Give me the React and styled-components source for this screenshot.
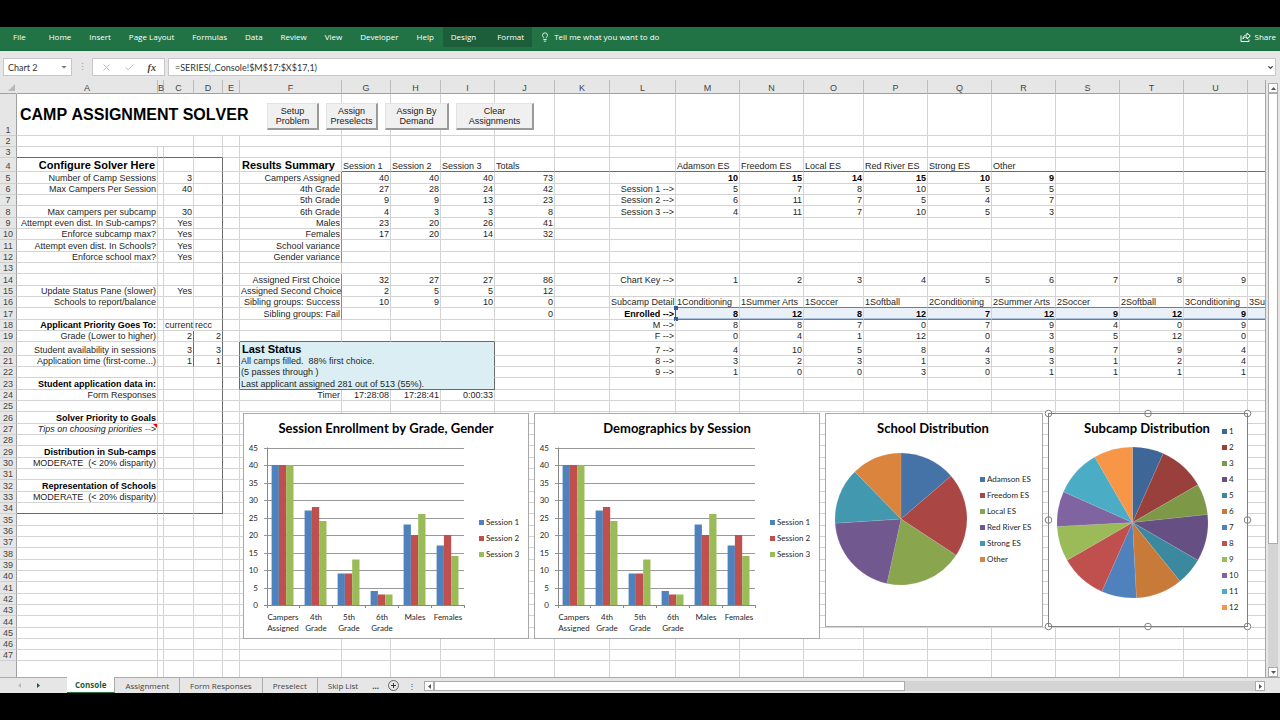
import styled, { createGlobalStyle, css } from 'styled-components';
import { Lightbulb, X, Check, ChevronDown } from 'lucide-react';

const GlobalStyle = createGlobalStyle`
  * {
    box-sizing: border-box;
  }
  body {
    margin: 0;
    background: #000;
    --green: #217346;
    --darkGreen: #1b5e39;
    --chrome: #e6e6e6;
    --line: #d3d3d3;
    --edge: #6b6b6b;
    --ui: 'Open Sans', 'Noto Sans', sans-serif;
    --sheet: 'Liberation Sans', Arial, sans-serif;
    --chart: Lato, 'Open Sans', sans-serif;
  }
  button, input {
    font: inherit;
    color: inherit;
    border: 0;
    margin: 0;
    padding: 0;
    background: none;
  }
`;

const AppStyles = styled.div`
  height: 100vh;
  padding: 27px 0;
  display: flex;
  flex-direction: column;
  background: #000;
`;

const Ribbon = styled.nav`
  flex: 0 0 24px;
  display: flex;
  align-items: flex-start;
  padding: 0 0 0 4px;
  background: var(--green);
  border-bottom: 1px solid #1b6b3f;
  color: #fff;
  font-family: var(--ui);
  font-size: 8px;
  line-height: 20px;
`;

const RibbonTab = styled.button`
  height: 20px;
  padding: 0 9px;
  white-space: nowrap;
  &:first-child {
    margin-right: 5px;
  }
`;

const ContextTabs = styled.div`
  display: flex;
  background: var(--darkGreen);
  button {
    margin: 0;
    padding: 0 8px;
  }
`;

const RibbonAction = styled.button`
  display: flex;
  align-items: center;
  gap: 4px;
  height: 20px;
  padding: 0 4px 0 8px;
  white-space: nowrap;
  margin-left: ${(props) => (props.$end ? 'auto' : '0')};
`;

const FormulaBar = styled.div`
  flex: 0 0 29px;
  display: flex;
  align-items: flex-start;
  padding: 7px 4px 0 3px;
  background: var(--chrome);
  font-family: var(--chart);
  font-size: 9px;
  color: #333;
`;

const barBox = css`
  display: flex;
  align-items: center;
  height: 18px;
  background: #fff;
  border: 1px solid #c8c8c8;
`;

const NameBox = styled.div`
  ${barBox}
  width: 69px;
  padding: 0 4px;
  input {
    flex: 1;
    min-width: 0;
  }
`;

const Grip = styled.span`
  width: 20px;
  line-height: 18px;
  text-align: center;
  color: #999;
`;

const FormulaTools = styled.div`
  ${barBox}
  width: 73px;
  margin-right: 3px;
  justify-content: space-around;
  padding: 0 2px;
  color: #b5b5b5;
  button {
    display: flex;
  }
  .fx {
    font: italic bold 10px 'Liberation Serif', serif;
    color: #444;
  }
`;

const FormulaField = styled.div`
  ${barBox}
  flex: 1;
  padding: 0 1px 0 6px;
  input {
    flex: 1;
  }
  button {
    display: flex;
  }
`;

const Caret = styled.button`
  width: 6px;
  height: 3px;
  background: #777;
  clip-path: polygon(0 0, 100% 0, 50% 100%);
`;

const Workspace = styled.main`
  flex: 1;
  min-height: 0;
  display: flex;
  background: var(--chrome);
`;

const SheetPane = styled.div`
  position: relative;
  flex: 1;
  min-width: 0;
  overflow: hidden;
  border-right: 1px solid #a6a6a6;
`;

const Sheet = styled.table`
  table-layout: fixed;
  width: 0;
  border-collapse: separate;
  border-spacing: 0;
  background: #fff;
  font-family: var(--sheet);
  font-size: 9px;
  line-height: 10px;
  color: #262626;
`;

const ColumnHead = styled.th`
  height: 14px;
  padding: 2px 0 0;
  background: var(--chrome);
  border-right: 1px solid #bdbdbd;
  border-bottom: 1px solid #a0a0a0;
  font-weight: normal;
  color: #444;
`;

const Corner = styled(ColumnHead)`
  border-right-color: var(--chrome);
  span {
    display: block;
    width: 7px;
    height: 7px;
    margin-left: 8px;
    background: #b8b8b8;
    clip-path: polygon(100% 0, 100% 100%, 0 100%);
  }
`;

const RowHead = styled.th`
  padding: 0;
  vertical-align: bottom;
  background: var(--chrome);
  border-right: 1px solid #a0a0a0;
  border-bottom: 1px solid #cfcfcf;
  font-weight: normal;
  color: #444;
`;

const Cell = styled.td`
  position: relative;
  height: ${(props) => props.$height}px;
  padding: 0 1px;
  vertical-align: bottom;
  white-space: nowrap;
  text-align: ${(props) => (props.$right ? 'right' : 'left')};
  border-right: 1px solid ${(props) => props.$edgeRight || 'var(--line)'};
  border-bottom: 1px solid ${(props) => props.$edgeBottom || 'var(--line)'};
  ${(props) => props.$bold && 'font-weight: bold; color: #000;'}
  ${(props) => props.$italic && 'font-style: italic;'}
  ${(props) => props.$fill && `background: ${props.$fill};`}
  ${(props) =>
    props.$size === 'title' &&
    css`
      padding: 0 3px;
      font-size: 16px;
      font-kerning: none;
      vertical-align: middle;
    `}
  ${(props) =>
    props.$size === 'heading' &&
    css`
      padding: 0 2px;
      font-size: 11px;
      line-height: 12px;
    `}
  ${(props) => props.$picked && 'box-shadow: inset 0 -1px #a9bfdb;'}
`;

const Handle = styled.i`
  position: absolute;
  left: -2px;
  ${(props) => props.$at}: -2px;
  width: 4px;
  height: 4px;
  background: #2f5d97;
`;

const Note = styled.i`
  position: absolute;
  top: 0;
  right: 0;
  width: 4px;
  height: 4px;
  background: #d00;
  clip-path: polygon(0 0, 100% 0, 100% 100%);
`;

const Macros = styled.div`
  position: absolute;
  top: 23px;
  left: 267px;
  display: flex;
  gap: 7px;
`;

const MacroButton = styled.button`
  width: ${(props) => props.$width}px;
  height: 27px;
  background: #f0f0f0;
  border: 1px solid #e3e3e3;
  border-right: 2px solid #9a9a9a;
  border-bottom: 2px solid #9a9a9a;
  font-family: var(--sheet);
  font-size: 9px;
  line-height: 10px;
  color: #222;
`;

const Charts = styled.div`
  position: absolute;
  top: 333px;
  left: 243px;
  display: flex;
  align-items: flex-start;
  gap: 5px;
`;

const ChartFrame = styled.svg`
  display: block;
  flex: none;
  overflow: visible;
  background: #fff;
  outline: 1px solid ${(props) => (props.$active ? '#7f7f7f' : '#a8a8a8')};
  outline-offset: -1px;
  font-family: var(--chart);
  font-size: 8px;
  fill: #262626;
  .title {
    font-size: 13px;
    font-weight: bold;
    font-kerning: none;
    fill: #000;
  }
`;

const ScrollColumn = styled.div`
  width: 10px;
  margin: 3px 2px 0 2px;
  display: flex;
  flex-direction: column;
  background: #d4d4d4;
`;

const ScrollButton = styled.button`
  flex: 0 0 10px;
  height: 10px;
  display: flex;
  align-items: center;
  justify-content: center;
  background: #fff;
  border: 1px solid #ababab;
  svg {
    fill: #555;
  }
`;

const Thumb = styled.div`
  flex: 0 0 ${(props) => props.$share}%;
  background: #fff;
  border: 1px solid #ababab;
`;

const StatusRow = styled.footer`
  flex: 0 0 16px;
  display: flex;
  align-items: stretch;
  background: var(--chrome);
  border-top: 1px solid #ababab;
  font-family: var(--ui);
  font-size: 8px;
  line-height: 14px;
  color: #444;
`;

const TabArrows = styled.div`
  width: 67px;
  display: flex;
  align-items: center;
  gap: 14px;
  padding-left: 17px;
  button {
    display: flex;
  }
`;

const SheetTab = styled.button`
  padding: 0 10px;
  white-space: nowrap;
  border-right: 1px solid #ababab;
  ${(props) =>
    props.$active &&
    css`
      margin-top: -1px;
      padding: 0 8px;
      background: #fff;
      border-bottom: 1px solid var(--green);
      color: #1b5e39;
      font-weight: bold;
    `}
  &:last-of-type {
    border-right: 0;
  }
`;

const TabExtras = styled.div`
  display: flex;
  align-items: center;
  gap: 9px;
  padding: 0 8px 0 4px;
  color: #444;
  button {
    display: flex;
  }
`;

const ScrollRow = styled.div`
  flex: 1;
  display: flex;
  align-items: stretch;
  height: 10px;
  margin: 3px 15px 0 0;
  background: #d4d4d4;
`;

const COLUMNS = [
  ['A', 141], ['B', 6], ['C', 30], ['D', 29], ['E', 17], ['F', 102], ['G', 49],
  ['H', 50], ['I', 54], ['J', 60], ['K', 55], ['L', 66], ['M', 64], ['N', 64],
  ['O', 60], ['P', 64], ['Q', 64], ['R', 64], ['S', 64], ['T', 64], ['U', 64],
  ['V', 64],
];
const LETTERS = COLUMNS.map(([letter]) => letter);

// each entry: first cell of the run, then the values going right
const RUNS = [
  ['A1', 'CAMP ASSIGNMENT SOLVER'],
  ['A4', 'Configure Solver Here'],
  ['A5', 'Number of Camp Sessions', null, 3],
  ['A6', 'Max Campers Per Session', null, 40],
  ['A8', 'Max campers per subcamp', null, 30],
  ['A9', 'Attempt even dist. In Sub-camps?', null, 'Yes'],
  ['A10', 'Enforce subcamp max?', null, 'Yes'],
  ['A11', 'Attempt even dist. In Schools?', null, 'Yes'],
  ['A12', 'Enforce school max?', null, 'Yes'],
  ['A15', 'Update Status Pane (slower)', null, 'Yes'],
  ['A16', 'Schools to report/balance'],
  ['A18', 'Applicant Priority Goes To:', null, 'current', 'recc'],
  ['A19', 'Grade (Lower to higher)', null, 2, 2],
  ['A20', 'Student availability in sessions', null, 3, 3],
  ['A21', 'Application time (first-come...)', null, 1, 1],
  ['A23', 'Student application data in:'],
  ['A24', 'Form Responses'],
  ['A26', 'Solver Priority to Goals'],
  ['A27', 'Tips on choosing priorities -->'],
  ['A29', 'Distribution in Sub-camps'],
  ['A30', 'MODERATE\u00a0 (< 20% disparity)'],
  ['A32', 'Representation of Schools'],
  ['A33', 'MODERATE\u00a0 (< 20% disparity)'],
  ['F4', 'Results Summary', 'Session 1', 'Session 2', 'Session 3', 'Totals'],
  ['F5', 'Campers Assigned', 40, 40, 40, 73],
  ['F6', '4th Grade', 27, 28, 24, 42],
  ['F7', '5th Grade', 9, 9, 13, 23],
  ['F8', '6th Grade', 4, 3, 3, 8],
  ['F9', 'Males', 23, 20, 26, 41],
  ['F10', 'Females', 17, 20, 14, 32],
  ['F11', 'School variance'],
  ['F12', 'Gender variance'],
  ['F14', 'Assigned First Choice', 32, 27, 27, 86],
  ['F15', 'Assigned Second Choice', 2, 5, 5, 12],
  ['F16', 'Sibling groups: Success', 10, 9, 10, 0],
  ['F17', 'Sibling groups: Fail', null, null, null, 0],
  ['F20', 'Last Status'],
  ['F21', 'All camps filled.\u00a0 88% first choice.'],
  ['F22', '(5 passes through )'],
  ['F23', 'Last applicant assigned 281 out of 513 (55%).'],
  ['F24', 'Timer', '17:28:08', '17:28:41', '0:00:33'],
  ['M4', 'Adamson ES', 'Freedom ES', 'Local ES', 'Red River ES', 'Strong ES', 'Other'],
  ['M5', 10, 15, 14, 15, 10, 9],
  ['L6', 'Session 1 -->', 5, 7, 8, 10, 5, 5],
  ['L7', 'Session 2 -->', 6, 11, 7, 5, 4, 7],
  ['L8', 'Session 3 -->', 4, 11, 7, 10, 5, 3],
  ['L14', 'Chart Key -->', 1, 2, 3, 4, 5, 6, 7, 8, 9],
  ['L16', 'Subcamp Detail', '1Conditioning', '1Summer Arts', '1Soccer', '1Softball',
    '2Conditioning', '2Summer Arts', '2Soccer', '2Softball', '3Conditioning', '3Summer Arts'],
  ['L17', 'Enrolled -->', 8, 12, 8, 12, 7, 12, 9, 12, 9],
  ['L18', 'M -->', 8, 8, 7, 0, 7, 9, 4, 0, 9],
  ['L19', 'F -->', 0, 4, 1, 12, 0, 3, 5, 12, 0],
  ['L20', '7 -->', 4, 10, 5, 8, 4, 8, 7, 9, 4],
  ['L21', '8 -->', 3, 2, 3, 1, 3, 3, 1, 2, 4],
  ['L22', '9 -->', 1, 0, 0, 3, 0, 1, 1, 1, 1],
];

const VALUES = {};
RUNS.forEach(([start, ...items]) => {
  const from = LETTERS.indexOf(start[0]);
  items.forEach((item, i) => {
    if (item !== null) VALUES[LETTERS[from + i] + start.slice(1)] = item;
  });
});

const SPANS = { A1: 6, A2: 3, F20: 4, F21: 4, F22: 4, F23: 4 };
const BOLD_ROWS = [1, 4, 18, 23, 26, 29, 32];
const HEADINGS = ['A4', 'F4', 'F20'];
const EDGE = 'var(--edge)';

function rowHeight(row) {
  if (row === 1) return 42;
  if (row === 48) return 60;
  if (row === 4 || row === 20) return 14;
  if (row > 4 && row < 47 && row % 3 === 2) return 12;
  return 11;
}

function cellLook(letter, row) {
  const col = LETTERS.indexOf(letter);
  const id = letter + row;
  const value = VALUES[id];
  const status = letter === 'F' && row >= 20 && row <= 23;
  const picked = row === 17 && col >= 12;
  const look = {
    $height: rowHeight(row),
    $right:
      !status && id !== 'F4' && row !== 1 &&
      (typeof value === 'number' || 'ACFL'.includes(letter) || /^\d+:/.test(value)),
    $bold:
      (letter === 'A' && BOLD_ROWS.includes(row)) ||
      HEADINGS.includes(id) || (row === 5 && col >= 12) || (row === 17 && col >= 11),
    $italic: id === 'A27',
    $picked: picked,
  };
  if (row === 1 && letter === 'A') look.$size = 'title';
  if (HEADINGS.includes(id)) look.$size = 'heading';
  if (status) {
    look.$fill = '#daeef3';
    look.$edgeRight = EDGE;
    look.$edgeBottom = row === 23 ? EDGE : '#daeef3';
  }
  if (picked) look.$fill = '#e9f0f8';
  if (row === 3 && col <= 3) look.$edgeBottom = EDGE;
  if (row === 34 && col <= 3) look.$edgeBottom = EDGE;
  if (row === 4 && col >= 6) look.$edgeBottom = EDGE;
  if (row === 19 && col >= 5 && col <= 8) look.$edgeBottom = EDGE;
  if ((row === 16 || row === 17) && col >= 12) look.$edgeBottom = '#5b7fb0';
  if (letter === 'D' && row >= 4 && row <= 34) look.$edgeRight = EDGE;
  if (letter === 'C' && row >= 19 && row <= 21) look.$edgeRight = EDGE;
  if (letter === 'E' && row >= 20 && row <= 23) look.$edgeRight = EDGE;
  if (letter === 'F' && row >= 5 && row <= 17 && row !== 13) look.$edgeRight = '#8a8a8a';
  if (id === 'L17') look.$edgeRight = '#2f5d97';
  return look;
}

function SheetRow({ row }) {
  const cells = [];
  for (let i = 0; i < LETTERS.length; i += 1) {
    const id = LETTERS[i] + row;
    cells.push(
      <Cell key={id} colSpan={SPANS[id]} {...cellLook(LETTERS[i], row)}>
        {VALUES[id]}
        {id === 'A27' && <Note />}
        {id === 'M17' && <Handle $at="top" />}
        {id === 'M17' && <Handle $at="bottom" />}
      </Cell>
    );
    if (SPANS[id]) i += SPANS[id] - 1;
  }
  return (
    <tr>
      <RowHead scope="row">{row < 48 ? row : ''}</RowHead>
      {cells}
    </tr>
  );
}

const BLUE = '#4f81bd';
const RED = '#c0504d';
const LIME = '#9bbb59';

const GROUPS = [
  { label: ['Campers', 'Assigned'], values: [40, 40, 40] },
  { label: ['4th', 'Grade'], values: [27, 28, 24] },
  { label: ['5th', 'Grade'], values: [9, 9, 13] },
  { label: ['6th', 'Grade'], values: [4, 3, 3] },
  { label: ['Males'], values: [23, 20, 26] },
  { label: ['Females'], values: [17, 20, 14] },
];

const SESSIONS = [
  { name: 'Session 1', color: BLUE },
  { name: 'Session 2', color: RED },
  { name: 'Session 3', color: LIME },
];

const SCHOOLS = [
  { name: 'Adamson ES', value: 10, color: '#4572a7' },
  { name: 'Freedom ES', value: 15, color: '#aa4643' },
  { name: 'Local ES', value: 14, color: '#89a54e' },
  { name: 'Red River ES', value: 15, color: '#71588f' },
  { name: 'Strong ES', value: 10, color: '#4198af' },
  { name: 'Other', value: 9, color: '#db843d' },
];

const SUBCAMPS = [
  [8, '#3e6697'], [12, '#993f3c'], [8, '#7d9947'], [12, '#664f82'],
  [7, '#3b899f'], [12, '#c87a38'], [9, BLUE], [12, RED],
  [9, LIME], [9, '#8064a2'], [12, '#4bacc6'], [10, '#f79646'],
].map(([value, color], i) => ({ name: String(i + 1), value, color }));

function Legend({ items, x, y }) {
  return items.map(({ name, color }, i) => (
    <g key={name}>
      <rect x={x} y={y + i * 16 - 2} width="5" height="5" fill={color} />
      <text x={x + 7} y={y + i * 16 + 3}>{name}</text>
    </g>
  ));
}

function BarChart({ title }) {
  const scale = 3.5;
  const base = 192;
  const step = 33;
  return (
    <ChartFrame width="286" height="226" role="img" aria-label={title}>
      <text className="title" x="143" y="20" textAnchor="middle">{title}</text>
      {[0, 5, 10, 15, 20, 25, 30, 35, 40, 45].map((n) => (
        <g key={n}>
          <rect x="21" y={Math.round(base - n * scale)} width="200" height="1" fill="#999" />
          <text x="15" y={base - n * scale + 3} textAnchor="end">{n}</text>
        </g>
      ))}
      {GROUPS.map(({ label, values }, g) => (
        <g key={label.join(' ')}>
          {values.map((value, i) => (
            <rect
              key={SESSIONS[i].name}
              x={28.6 + g * step + i * 7.3}
              y={base - value * scale}
              width="7.3"
              height={value * scale}
              fill={SESSIONS[i].color}
            />
          ))}
          {label.map((word, i) => (
            <text key={word} x={40 + g * step} y={207 + i * 11} textAnchor="middle">{word}</text>
          ))}
          <rect x={24 + (g + 1) * step - 1} y={base} width="1" height="3" fill="#888" />
        </g>
      ))}
      <path d="M24.500 34.500V195M21 192.500H221" stroke="#888" fill="none" />
      <Legend items={SESSIONS} x={236} y={109} />
    </ChartFrame>
  );
}

function Pie({ slices, cx, cy, r }) {
  const total = slices.reduce((sum, slice) => sum + slice.value, 0);
  const point = (amount) => {
    const angle = (amount / total) * Math.PI * 2;
    return `${cx + r * Math.sin(angle)} ${cy - r * Math.cos(angle)}`;
  };
  let start = 0;
  return slices.map(({ name, value, color }) => {
    const from = start;
    start += value;
    return (
      <path
        key={name}
        d={`M${cx} ${cy}L${point(from)}A${r} ${r} 0 0 1 ${point(start)}Z`}
        fill={color}
        stroke="#ccc"
        strokeOpacity="0.3"
        strokeWidth="0.5"
      />
    );
  });
}

function SelectionHandles({ width, height }) {
  const spots = [0, 0.5, 1].flatMap((x) => [0, 0.5, 1].map((y) => [x, y]));
  return spots
    .filter(([x, y]) => x !== 0.5 || y !== 0.5)
    .map(([x, y]) => (
      <circle
        key={`${x}-${y}`}
        cx={0.5 + x * (width - 1)}
        cy={0.5 + y * (height - 1)}
        r="3.3"
        fill="#fff"
        stroke="#808080"
      />
    ));
}

function Arrow({ turn = 0, color }) {
  return (
    <svg width="5" height="5" viewBox="0 0 5 5" style={{ fill: color }}>
      <path d="M4 0V5L1 2.500Z" transform={`rotate(${turn} 2.500 2.500)`} />
    </svg>
  );
}

const TABS = ['Home', 'Insert', 'Page Layout', 'Formulas', 'Data', 'Review', 'View', 'Developer', 'Help'];

export default function App() {
  return (
    <>
      <GlobalStyle />
      <AppStyles>
        <Ribbon>
          <RibbonTab>File</RibbonTab>
          {TABS.map((tab) => (
            <RibbonTab key={tab}>{tab}</RibbonTab>
          ))}
          <ContextTabs>
            <RibbonTab>Design</RibbonTab>
            <RibbonTab>Format</RibbonTab>
          </ContextTabs>
          <RibbonAction>
            <Lightbulb size={10} strokeWidth={2} />
            Tell me what you want to do
          </RibbonAction>
          <RibbonAction $end>
            <svg width="11" height="10" viewBox="0 0 11 10" fill="none" stroke="currentColor">
              <path d="M1 3.500V9.500H9V7.500M3 7C3 4.500 4.500 3 7 3V1L10.300 4L7 7V5C5 5 4 5.500 3 7Z" />
            </svg>
            Share
          </RibbonAction>
        </Ribbon>
        <FormulaBar>
          <NameBox>
            <input aria-label="Name box" defaultValue="Chart 2" />
            <Caret aria-label="Show names" />
          </NameBox>
          <Grip>⋮</Grip>
          <FormulaTools>
            <button aria-label="Cancel"><X size={11} /></button>
            <button aria-label="Enter"><Check size={11} /></button>
            <button className="fx" aria-label="Insert function">fx</button>
          </FormulaTools>
          <FormulaField>
            <input aria-label="Formula" defaultValue="=SERIES(,,Console!$M$17:$X$17,1)" />
            <button aria-label="Expand formula bar"><ChevronDown size={7} strokeWidth={4} /></button>
          </FormulaField>
        </FormulaBar>
        <Workspace>
          <SheetPane>
            <Sheet>
              <colgroup>
                <col width="17" />
                {COLUMNS.map(([letter, width]) => (
                  <col key={letter} width={width} />
                ))}
              </colgroup>
              <thead>
                <tr>
                  <Corner><span /></Corner>
                  {LETTERS.map((letter) => (
                    <ColumnHead key={letter} scope="col">{letter}</ColumnHead>
                  ))}
                </tr>
              </thead>
              <tbody>
                {Array.from({ length: 48 }, (_, i) => (
                  <SheetRow key={i + 1} row={i + 1} />
                ))}
              </tbody>
            </Sheet>
            <Macros>
              <MacroButton $width={52}>Setup Problem</MacroButton>
              <MacroButton $width={52}>Assign Preselects</MacroButton>
              <MacroButton $width={64}>Assign By Demand</MacroButton>
              <MacroButton $width={78}>Clear Assignments</MacroButton>
            </Macros>
            <Charts>
              <BarChart title="Session Enrollment by Grade, Gender" />
              <BarChart title="Demographics by Session" />
              <ChartFrame width="218" height="214" role="img" aria-label="School Distribution">
                <text className="title" x="108" y="20" textAnchor="middle">School Distribution</text>
                <Pie slices={SCHOOLS} cx={76} cy={106} r={66} />
                <Legend items={SCHOOLS} x={155} y={66} />
              </ChartFrame>
              <ChartFrame $active width="200" height="214" role="img" aria-label="Subcamp Distribution">
                <text className="title" x="99" y="20" textAnchor="middle">Subcamp Distribution</text>
                <Pie slices={SUBCAMPS} cx={84.5} cy={109.5} r={75.5} />
                <Legend items={SUBCAMPS} x={174} y={18} />
                <SelectionHandles width={200} height={214} />
              </ChartFrame>
            </Charts>
          </SheetPane>
          <ScrollColumn>
            <ScrollButton aria-label="Scroll up"><Arrow turn={90} /></ScrollButton>
            <Thumb $share={76} />
            <ScrollButton style={{ marginTop: 'auto' }} aria-label="Scroll down"><Arrow turn={-90} /></ScrollButton>
          </ScrollColumn>
        </Workspace>
        <StatusRow>
          <TabArrows>
            <button aria-label="Previous sheet"><Arrow color="#bbb" /></button>
            <button aria-label="Next sheet"><Arrow turn={180} color="#1b5e39" /></button>
          </TabArrows>
          <SheetTab $active>Console</SheetTab>
          <SheetTab>Assignment</SheetTab>
          <SheetTab>Form Responses</SheetTab>
          <SheetTab>Preselect</SheetTab>
          <SheetTab>Skip List</SheetTab>
          <TabExtras>
            <b>...</b>
            <button aria-label="New sheet">
              <svg width="11" height="11" viewBox="0 0 11 11" fill="none" stroke="#666">
                <circle cx="5.500" cy="5.500" r="5" />
                <path d="M5.500 3V8M3 5.500H8" stroke="#333" />
              </svg>
            </button>
            <span>⋮</span>
          </TabExtras>
          <ScrollRow>
            <ScrollButton aria-label="Scroll left"><Arrow /></ScrollButton>
            <Thumb $share={56} />
            <ScrollButton style={{ marginLeft: 'auto' }} aria-label="Scroll right"><Arrow turn={180} /></ScrollButton>
          </ScrollRow>
        </StatusRow>
      </AppStyles>
    </>
  );
}
